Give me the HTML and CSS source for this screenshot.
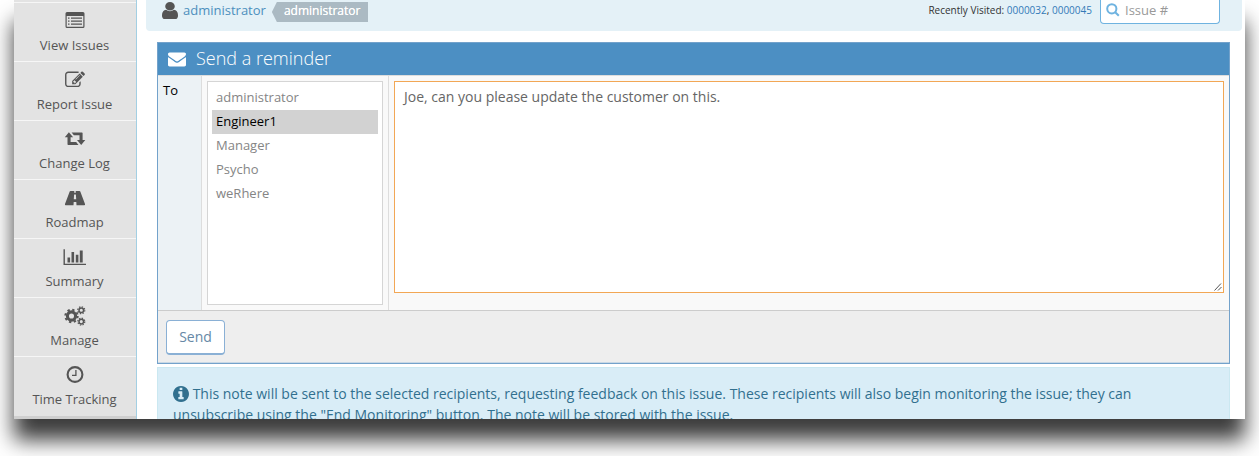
FILE: index.html
```html
<!DOCTYPE html>
<html lang="en">
<head>
<meta charset="utf-8">
<title>Send a reminder</title>
<link rel="stylesheet" href="styles.css">
</head>
<body>
<div class="window">
  <nav class="sidebar">
    <a class="nav-item"><svg class="icon" viewBox="0 1 22 20"><path fill-rule="evenodd" d="M3 2h16q1.500 0 1.500 1.500v13q0 1.500-1.500 1.500H3q-1.500 0-1.500-1.500v-13Q1.500 2 3 2zM2.700 6v10.300q0 .500.500.500h15.600q.500 0 .500-.500V6z"/><path d="M4 7.500h1.500v1.300H4zM7 7.500h11v1.300H7zM4 10.500h1.500v1.300H4zM7 10.500h11v1.300H7zM4 13.500h1.500v1.300H4zM7 13.500h11v1.300H7z"/></svg><span>View Issues</span></a>
    <a class="nav-item"><svg class="icon" viewBox="-94 0 1980 1792"><path d="M888 1184l116-116-152-152-116 116v56h96v96h56zm440-720q-16-16-33 1l-350 350q-17 17-1 33t33-1l350-350q17-17 1-33zm80 594v190q0 119-84.500 203.500t-203.500 84.500h-832q-119 0-203.500-84.500t-84.500-203.500v-832q0-119 84.500-203.500t203.500-84.500h832q63 0 117 25 15 7 18 23 3 17-9 29l-49 49q-14 14-32 8-23-6-45-6h-832q-66 0-113 47t-47 113v832q0 66 47 113t113 47h832q66 0 113-47t47-113v-126q0-13 9-22l64-64q15-15 35-7t20 29zm-96-738l288 288-672 672h-288v-288zm444 132l-92 92-288-288 92-92q28-28 68-28t68 28l152 152q28 28 28 68t-28 68z"/></svg><span>Report Issue</span></a>
    <a class="nav-item"><svg class="icon" viewBox="0 0 22 20"><path d="M4.900 3.300l4.200 5H6.600v4.800h5.600l2.300 2.800H4.200q-.7 0-.7-.7V8.300H.8zM17.200 16l-4.200-5h2.500V6.200H9.900L7.600 3.400h10.300q.7 0 .7.700V11h2.700z"/></svg><span>Change Log</span></a>
    <a class="nav-item"><svg class="icon" viewBox="0 0 22 20"><path fill-rule="evenodd" d="M6.500 3h3.800l-.1 1.800h1.600L11.700 3h3.800q.6 0 .8.600L21 16q.4 1.200-.8 1.200h-7.700l-.2-3.200H9.700l-.2 3.200H1.800Q.6 17.200 1 16L5.700 3.600Q5.900 3 6.500 3zM10.100 6.500l-.3 4.800h2.400l-.3-4.800z"/></svg><span>Roadmap</span></a>
    <a class="nav-item"><svg class="icon icon-wide" viewBox="0 0 24 20"><path d="M.500 2.200h1.400v14.500H23V18H.500zM4.500 10.500h2.600v5H4.500zM8.500 5h2.600v10.500H8.500zM12.800 7.800h2.600v7.700h-2.600zM16.800 3.500h2.900v12h-2.900z"/></svg><span>Summary</span></a>
    <a class="nav-item"><svg class="icon" viewBox="0 0 22 20"><g fill="none" stroke="#555"><circle cx="7.500" cy="10" r="4.100" stroke-width="3.100"/><circle cx="7.500" cy="10" r="6.200" stroke-width="2" stroke-dasharray="2.300 2.569"/><circle cx="17.300" cy="4.200" r="2.300" stroke-width="1.500"/><circle cx="17.300" cy="4.200" r="3.500" stroke-width="1.200" stroke-dasharray="1.400 1.349"/><circle cx="17.300" cy="15.600" r="2.300" stroke-width="1.500"/><circle cx="17.300" cy="15.600" r="3.500" stroke-width="1.200" stroke-dasharray="1.400 1.349"/></g></svg><span>Manage</span></a>
    <a class="nav-item"><svg class="icon" viewBox="0 1 22 20"><g fill="none" stroke="#555"><circle cx="11" cy="10.500" r="7.400" stroke-width="2.100"/><path stroke-width="1.300" d="M11.900 6v5.300H8"/></g></svg><span>Time Tracking</span></a>
    <div class="nav-rest"></div>
  </nav>
  <main class="content">
    <header class="topbar">
      <svg class="user-icon" viewBox="256 128 1280 1536" preserveAspectRatio="none"><path d="M1536 1399q0 109-62.500 187t-150.500 78h-854q-88 0-150.500-78t-62.500-187q0-85 8.500-160.500t31.500-152 58.500-131 94-89 134.500-34.500q131 128 313 128t313-128q76 0 134.500 34.500t94 89 58.500 131 31.500 152 8.500 160.500zm-256-887q0 159-112.500 271.500t-271.500 112.500-271.500-112.500-112.500-271.500 112.500-271.500 271.500-112.500 271.500 112.500 112.500 271.500z"/></svg>
      <a class="user-name">administrator</a>
      <span class="role">administrator</span>
      <span class="recent">Recently Visited: <a>0000032</a>, <a>0000045</a></span>
      <div class="search"><svg class="search-icon" viewBox="0 0 14 14"><circle cx="5.800" cy="5.800" r="4.600"/><path d="M9.200 9.200l3.600 3.600"/></svg><span>Issue #</span></div>
    </header>
    <section class="panel">
      <h1 class="panel-title"><svg class="mail-icon" viewBox="0 256 1792 1408"><path d="M1792 710v794q0 66-47 113t-113 47h-1472q-66 0-113-47t-47-113v-794q44 49 101 87 362 246 497 345 57 42 92.500 65.500t94.500 48 110 24.500h2q51 0 110-24.500t94.500-48 92.500-65.500q170-123 498-345 57-39 100-87zm0-294q0 79-49 151t-122 123q-376 261-468 325-10 7-42.500 31t-54 38.800-52 32.500-57.500 27-50 9h-2q-23 0-50-9t-57.500-27-52-32.500-54-38.800-42.500-31q-91-64-262-182.500t-205-142.500q-62-42-117-115.500t-55-136.500q0-78 41.500-130t118.500-52h1472q65 0 112.500 47t47.500 113z"/></svg><span>Send a reminder</span></h1>
      <div class="form-row">
        <div class="label-cell">To</div>
        <div class="list-cell">
          <div class="listbox">
            <div class="option">administrator</div>
            <div class="option selected">Engineer1</div>
            <div class="option">Manager</div>
            <div class="option">Psycho</div>
            <div class="option">weRhere</div>
          </div>
        </div>
        <div class="message-cell">
          <div class="message"><span>Joe, can you please update the customer on this.</span><svg class="grip" viewBox="0 0 8 8"><path d="M.500 7.500l6.500-7M4 7.500L7.500 4"/></svg></div>
        </div>
      </div>
      <footer class="panel-footer"><span class="button">Send</span></footer>
    </section>
    <div class="notice"><svg class="info-icon" viewBox="128 128 1536 1536"><path d="M1152 1376v-160q0-14-9-23t-23-9h-96v-512q0-14-9-23t-23-9h-320q-14 0-23 9t-9 23v160q0 14 9 23t23 9h96v320h-96q-14 0-23 9t-9 23v160q0 14 9 23t23 9h448q14 0 23-9t9-23zm-128-896v-160q0-14-9-23t-23-9h-192q-14 0-23 9t-9 23v160q0 14 9 23t23 9h192q14 0 23-9t9-23zm640 416q0 209-103 385.500t-279.500 279.500-385.500 103-385.500-103-279.500-279.500-103-385.500 103-385.500 279.500-279.500 385.500-103 385.500 103 279.500 279.500 103 385.500z"/></svg> This note will be sent to the selected recipients, requesting feedback on this issue. These recipients will also begin monitoring the issue; they can<br>unsubscribe using the "End Monitoring" button. The note will be stored with the issue.</div>
  </main>
</div>
</body>
</html>
```
FILE: styles.css
```css
* { box-sizing: border-box; }
body {
  margin: 0;
  height: 456px;
  overflow: hidden;
  background: #fff;
  font-family: "Open Sans", sans-serif;
  font-size: 14px;
  color: #555;
}
.window {
  display: flex;
  width: 1231px;
  height: 419px;
  margin-left: 14px;
  background: #fff;
  box-shadow: 0 21px 20px rgba(0, 0, 0, .77);
}
.sidebar {
  width: 123px;
  height: 419px;
  padding-top: 2px;
  overflow: hidden;
  background: #e3e3e3;
  border-right: 1px solid #a3cfe3;
}
.nav-item {
  display: flex;
  flex-direction: column;
  align-items: center;
  height: 59px;
  padding-top: 8px;
  border-top: 1px solid #f6f6f6;
  line-height: 20px;
  font-size: 13px;
}
.nav-item span { margin-top: 4px; padding-right: 1px; }
.icon { width: 22px; height: 20px; fill: #555; margin-right: 1px; }
.icon-wide { width: 24px; }
.nav-rest { height: 4px; background: #cfcfcf; border-top: 1px solid #e3e3e3; }
.content { flex: 1; height: 419px; overflow: hidden; padding: 0 3px 0 9px; }
.topbar {
  display: flex;
  height: 31px;
  padding: 0 22px 0 16px;
  background: #e4f1f7;
  border-radius: 0 0 4px 4px;
}
.user-icon { width: 16px; height: 17px; margin-top: 2px; fill: #555; }
.user-name { margin: 1px 0 0 5px; line-height: 19px; font-size: 13px; color: #4c8fbd; }
.role {
  height: 20px;
  margin: 2px 0 0 6px;
  padding: 0 8px 0 12px;
  background: #abbac3;
  clip-path: polygon(5px 0, 100% 0, 100% 100%, 5px 100%, 0 50%);
  color: #fff;
  line-height: 18px;
  font-size: 12px;
  text-shadow: 0 0 .500px #fff;
}
.recent { margin-left: auto; line-height: 21px; font-size: 10px; color: #333; }
.recent a { color: #337ab7; }
.search {
  display: flex;
  width: 120px;
  height: 24px;
  margin-left: 8px;
  padding-left: 5px;
  background: #fff;
  border: 1px solid #6fb3e0;
  border-top: 0;
  border-radius: 0 0 4px 4px;
  color: #999;
  font-size: 13px;
  line-height: 20px;
}
.search-icon { width: 14px; height: 14px; margin: 3px 5px 0 0; fill: none; stroke: #6fb3e0; stroke-width: 2; }
.panel { width: 1073px; height: 322px; margin: 11px 0 0 11px; border: 1px solid #73a2cb; }
.panel-title {
  display: flex;
  align-items: center;
  height: 32px;
  margin: 0;
  padding: 0 0 2px 10px;
  background: #4c8fc3;
  color: #fff;
  font-size: 18px;
  font-weight: 300;
}
.mail-icon { width: 18px; height: 15px; margin: 3px 10px 0 0; fill: #fff; }
.form-row { display: flex; height: 236px; border-top: 1px solid #ddd; border-bottom: 1px solid #ccc; background: #f9f9f9; }
.label-cell { width: 44px; padding: 4px 5px; background: #ecf2f5; border-right: 1px solid #ddd; line-height: 20px; font-size: 13px; color: #000; }
.list-cell { width: 187px; padding: 5px; border-right: 1px solid #ddd; }
.listbox { width: 176px; height: 224px; padding: 4px; border: 1px solid #d5d5d5; background: #fff; }
.option { height: 24px; padding-left: 4px; line-height: 23px; font-size: 13px; color: #858585; }
.selected { background: #d2d2d2; color: #000; }
.message-cell { flex: 1; padding: 5px; }
.message {
  display: flex;
  justify-content: space-between;
  width: 830px;
  height: 212px;
  padding: 5px 1px 1px 9px;
  border: 1px solid #f2a755;
  background: #fff;
  line-height: 20px;
  color: #666;
}
.grip { align-self: flex-end; width: 8px; height: 8px; fill: none; stroke: #555; }
.panel-footer { height: 52px; padding: 9px 8px; background: #eee; border-bottom: 1px solid #c9d8e5; }
.button {
  display: block;
  width: 59px;
  height: 35px;
  border: 1px solid #8ab0d5;
  border-bottom-width: 2px;
  border-radius: 4px;
  background: #fff;
  color: #6688a6;
  line-height: 31px;
  text-align: center;
}
.notice {
  width: 1073px;
  height: 90px;
  margin: 3px 0 0 11px;
  padding: 15px 15px;
  border: 1px solid #cbe8f1;
  background: #d9edf7;
  color: #31708f;
  line-height: 21px;
}
.info-icon { width: 16px; height: 16px; vertical-align: -3px; fill: #31708f; }
```
